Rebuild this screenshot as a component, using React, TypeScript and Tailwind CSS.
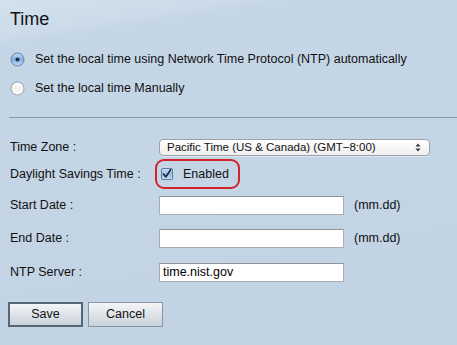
import React from "react";

const font = { fontFamily: '"Liberation Sans", Arial, sans-serif' };

function Radio({ checked }: { checked: boolean }) {
  return (
    <svg width="15" height="15" viewBox="0 0 15 15">
      <defs>
        <linearGradient id={checked ? "rOn" : "rOff"} x1="0" y1="0" x2="0" y2="1">
          {checked ? (
            <>
              <stop offset="0" stopColor="#c4dbf3" />
              <stop offset="0.5" stopColor="#82b0e2" />
              <stop offset="1" stopColor="#c0ddf8" />
            </>
          ) : (
            <>
              <stop offset="0" stopColor="#ffffff" />
              <stop offset="0.5" stopColor="#f1f1f1" />
              <stop offset="1" stopColor="#ffffff" />
            </>
          )}
        </linearGradient>
      </defs>
      <circle
        cx="7.5"
        cy="7.5"
        r="6.5"
        fill={`url(#${checked ? "rOn" : "rOff"})`}
        stroke={checked ? "#6a88a8" : "#9aa3ad"}
        strokeWidth="1"
      />
      {checked && <circle cx="7.5" cy="7.5" r="2" fill="#1d2f4a" />}
    </svg>
  );
}

function Checkbox() {
  return (
    <svg width="12" height="12" viewBox="0 0 12 12">
      <defs>
        <linearGradient id="cb" x1="0" y1="0" x2="0" y2="1">
          <stop offset="0" stopColor="#cfe2f5" />
          <stop offset="0.5" stopColor="#94bde6" />
          <stop offset="1" stopColor="#c9e2f8" />
        </linearGradient>
      </defs>
      <rect x="0.5" y="0.5" width="11" height="11" rx="1.5" fill="url(#cb)" stroke="#5f7c9c" />
      <path d="M2.6 6.2 L4.9 8.9 L9.6 1.8" fill="none" stroke="#1b2a40" strokeWidth="1.7" strokeLinecap="round" strokeLinejoin="round" />
    </svg>
  );
}

function Input({ value }: { value?: string }) {
  return (
    <div className="w-[185px] h-[19px] bg-white border border-[#a9adb1] border-t-[#8d9297] flex items-center pl-[3px] text-[12.5px] text-black">
      {value}
    </div>
  );
}

function Label({ children }: { children: React.ReactNode }) {
  return <div className="w-[149px] shrink-0 text-[12.5px] text-[#111]">{children}</div>;
}

export default function App() {
  return (
    <div
      className="w-[457px] h-[345px] overflow-hidden bg-[linear-gradient(171deg,#d3e1ed_0%,#ccdbe9_9%,#c5d6e6_11%,#c2d3e4_100%)] flex flex-col"
      style={font}
    >
      <div className="pl-[10px] pt-[10px] text-[18px] leading-[18px] text-[#111]">Time</div>

      <div className="mt-[21px] pl-[10px] flex flex-col gap-[9px]">
        <div className="h-[20px] flex items-center gap-[10px] text-[12.5px] text-[#111]">
          <Radio checked />
          <span>Set the local time using Network Time Protocol (NTP) automatically</span>
        </div>
        <div className="h-[20px] flex items-center gap-[10px] text-[12.5px] text-[#111]">
          <Radio checked={false} />
          <span>Set the local time Manually</span>
        </div>
      </div>

      <div className="mt-[19px] ml-[9px] h-px bg-[#8797a6]" />

      <div className="mt-[21px] pl-[10px] flex flex-col">
        <div className="h-[17px] flex items-center">
          <Label>Time Zone :</Label>
          <div className="w-[271px] h-[17px] rounded-[4px] border border-[#9da2a8] bg-[linear-gradient(#ffffff,#eeeeee)] flex items-center pl-[7px] pr-[8px] text-[11.5px] text-[#111] shadow-[0_1px_0_rgba(255,255,255,0.4)]">
            <span className="flex-1">Pacific Time (US &amp; Canada) (GMT−8:00)</span>
            <svg width="6" height="9" viewBox="0 0 6 9">
              <path d="M3 0.5 L5.5 3.5 L0.5 3.5 Z" fill="#333" />
              <path d="M3 8.5 L5.5 5.5 L0.5 5.5 Z" fill="#333" />
            </svg>
          </div>
        </div>

        <div className="mt-[3px] h-[30px] flex items-center">
          <Label>Daylight Savings Time :</Label>
          <div className="ml-[-4px] w-[85px] h-[30px] rounded-[9px] border-2 border-[#d3222b] flex items-center pl-[4px] gap-[10px] text-[12.5px] text-[#111]">
            <Checkbox />
            <span>Enabled</span>
          </div>
        </div>

        <div className="mt-[7px] h-[19px] flex items-center">
          <Label>Start Date :</Label>
          <Input />
          <span className="ml-[10px] text-[12.5px] text-[#111]">(mm.dd)</span>
        </div>

        <div className="mt-[14px] h-[19px] flex items-center">
          <Label>End Date :</Label>
          <Input />
          <span className="ml-[10px] text-[12.5px] text-[#111]">(mm.dd)</span>
        </div>

        <div className="mt-[15px] h-[19px] flex items-center">
          <Label>NTP Server :</Label>
          <Input value="time.nist.gov" />
        </div>
      </div>

      <div className="mt-[20px] pl-[8px] flex gap-[5px]">
        <button className="w-[75px] h-[25px] border-2 border-[#566676] bg-[linear-gradient(#f3f5f7,#dfe4e9_50%,#c9d1d9)] text-[12.5px] text-[#111]">
          Save
        </button>
        <button className="w-[75px] h-[25px] border border-[#8796a4] bg-[linear-gradient(#f3f5f7,#dfe4e9_50%,#c9d1d9)] text-[12.5px] text-[#111]">
          Cancel
        </button>
      </div>
    </div>
  );
}
